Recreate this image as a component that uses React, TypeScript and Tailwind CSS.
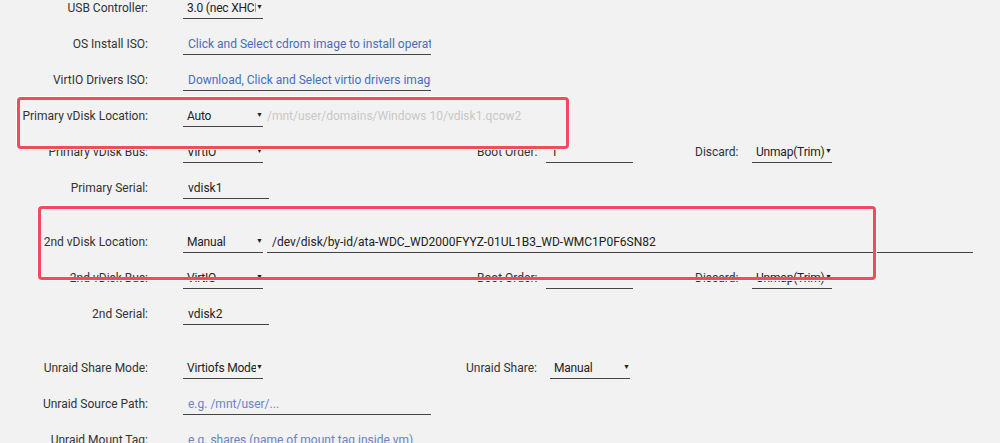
import React from "react"

function Row({ label, children }: { label: string; children?: React.ReactNode }) {
  return (
    <div className="flex h-[36px] items-center">
      <div className="w-[148px] shrink-0 text-right text-[#333]">{label}</div>
      <div className="ml-[35px] flex items-center">{children}</div>
    </div>
  )
}

function Select({ value, w = "w-[80px]" }: { value: string; w?: string }) {
  return (
    <div className={`flex h-[22px] ${w} shrink-0 items-center border-b border-[#444] text-[#222]`}>
      <span className="flex-1 overflow-hidden whitespace-nowrap pl-[4px] tracking-[-0.2px]">{value}</span>
      <span className="text-[7px] leading-none">▼</span>
    </div>
  )
}

function Input({ value, w, tone = "text-[#222]" }: { value: string; w: string; tone?: string }) {
  return (
    <div className={`h-[22px] ${w} shrink-0 overflow-hidden whitespace-nowrap border-b border-[#444] pl-[5px] leading-[22px] ${tone}`}>
      {value}
    </div>
  )
}

export default function App() {
  return (
    <div className="relative h-[443px] w-[1000px] overflow-hidden bg-[#f2f2f2] font-['Roboto',sans-serif] text-[12px]">
      <div className="-mt-[10px] flex flex-col">
        <Row label="USB Controller:">
          <Select value="3.0 (nec XHCI)" />
        </Row>
        <Row label="OS Install ISO:">
          <Input value="Click and Select cdrom image to install operating system" w="w-[248px]" tone="text-[#486dba]" />
        </Row>
        <Row label="VirtIO Drivers ISO:">
          <Input value="Download, Click and Select virtio drivers image" w="w-[248px]" tone="text-[#486dba]" />
        </Row>
        <Row label="Primary vDisk Location:">
          <Select value="Auto" />
          <span className="ml-[4px] text-[#c8c8c8]">/mnt/user/domains/Windows 10/vdisk1.qcow2</span>
        </Row>
        <Row label="Primary vDisk Bus:">
          <Select value="VirtIO" />
          <div className="ml-[214px] w-[69px] text-[#333]">Boot Order:</div>
          <Input value="1" w="w-[87px]" />
          <div className="ml-[62px] w-[57px] text-[#333]">Discard:</div>
          <Select value="Unmap(Trim)" />
        </Row>
        <Row label="Primary Serial:">
          <Input value="vdisk1" w="w-[86px]" />
        </Row>

        <div className="mt-[18px]">
          <Row label="2nd vDisk Location:">
            <Select value="Manual" />
            <Input value="/dev/disk/by-id/ata-WDC_WD2000FYYZ-01UL1B3_WD-WMC1P0F6SN82" w="ml-[4px] w-[706px]" />
          </Row>
          <Row label="2nd vDisk Bus:">
            <Select value="VirtIO" />
            <div className="ml-[214px] w-[69px] text-[#333]">Boot Order:</div>
            <Input value="" w="w-[87px]" />
            <div className="ml-[62px] w-[57px] text-[#333]">Discard:</div>
            <Select value="Unmap(Trim)" />
          </Row>
          <Row label="2nd Serial:">
            <Input value="vdisk2" w="w-[86px]" />
          </Row>
        </div>

        <div className="mt-[18px]">
          <Row label="Unraid Share Mode:">
            <Select value="Virtiofs Mode" />
            <div className="ml-[203px] w-[84px] text-[#333]">Unraid Share:</div>
            <Select value="Manual" />
          </Row>
          <Row label="Unraid Source Path:">
            <Input value="e.g. /mnt/user/..." w="w-[248px]" tone="text-[#6b82c4]" />
          </Row>
          <Row label="Unraid Mount Tag:">
            <Input value="e.g. shares (name of mount tag inside vm)" w="w-[248px]" tone="text-[#6b82c4]" />
          </Row>
        </div>
      </div>

      {/* annotation boxes */}
      <div className="absolute left-[17px] top-[97px] h-[52px] w-[552px] rounded-[4px] border-[3px] border-[#f24b5e] shadow-[0_0_0_1px_rgba(255,255,255,0.9)]" />
      <div className="absolute left-[38px] top-[206px] h-[74px] w-[838px] rounded-[4px] border-[3px] border-[#f24b5e] shadow-[0_0_0_1px_rgba(255,255,255,0.9)]" />
    </div>
  )
}
